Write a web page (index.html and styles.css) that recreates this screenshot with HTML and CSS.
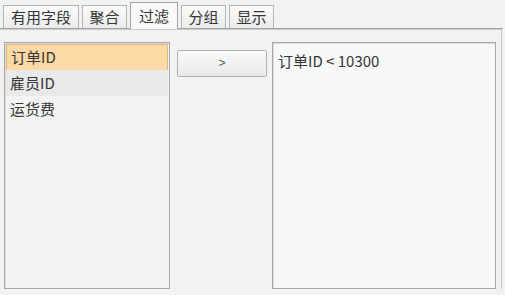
FILE: index.html
```html
<!DOCTYPE html>
<html lang="zh-CN">
<head>
    <meta charset="UTF-8">
    <title>过滤</title>
    <link rel="stylesheet" href="styles.css">
</head>
<body>
    <div class="tabs">
        <div class="tab wide">有用字段</div>
        <div class="tab">聚合</div>
        <div class="tab active">过滤</div>
        <div class="tab">分组</div>
        <div class="tab">显示</div>
    </div>
    <div class="panel">
        <div class="list">
            <div class="row selected">订单ID</div>
            <div class="row hover">雇员ID</div>
            <div class="row">运货费</div>
        </div>
        <div class="middle">
            <button class="move">&gt;</button>
        </div>
        <div class="filter">订单ID &lt; 10300</div>
    </div>
</body>
</html>
```
FILE: styles.css
```css
body {
    margin: 0;
    background-color: #f1f2f1;
    font-family: "Noto Sans CJK SC", "Liberation Sans", sans-serif;
    color: #363636;
    width: 505px;
    height: 295px;
    overflow: hidden;
}
.tabs {
    display: flex;
    align-items: flex-end;
    gap: 3px;
    height: 29px;
    padding-left: 3px;
    border-bottom: 1px solid #a3a5a4;
    box-sizing: border-box;
    margin-right: 2px;
}
.tab {
    width: 45px;
    height: 23px;
    text-align: center;
    font-size: 15px;
    line-height: 22px;
    border: 1px solid #b4b6b5;
    border-bottom: none;
    background: linear-gradient(#fbfbfb, #e9eaea);
    box-sizing: border-box;
}
.tab.wide {
    width: 76px;
}
.tab.active {
    width: 48px;
    height: 27px;
    line-height: 25px;
    background: #f8f9f8;
    border-color: #a3a5a4;
    margin-bottom: -1px;
}
.panel {
    display: flex;
    height: 260px;
    padding: 12px 0 0 4px;
    margin-right: 3px;
    border-top: 1px solid #c9cbca;
    border-right: 1px solid #c4c6c5;
    box-sizing: border-box;
}
.list {
    width: 166px;
    height: 247px;
    border: 1px solid #a6a8a7;
    box-shadow: inset 1px 1px 0 #dcdedd;
    background-color: #f2f3f2;
    box-sizing: border-box;
    padding: 1px;
}
.row {
    height: 26px;
    line-height: 25px;
    padding-left: 4px;
    font-size: 15px;
}
.row.selected {
    background-color: #fdd9a5;
    border: 1px solid #e2b879;
    border-bottom: none;
    line-height: 24px;
    box-sizing: border-box;
}
.row.hover {
    background-color: #e8e9e9;
}
.middle {
    width: 102px;
    padding: 6px 0 0 7px;
    box-sizing: border-box;
}
.move {
    width: 90px;
    height: 27px;
    border: 1px solid #b0b2b1;
    border-radius: 2px;
    background: linear-gradient(#f9f9f9, #e8e9e9);
    font-family: "Liberation Sans", sans-serif;
    font-size: 12px;
    color: #555;
    padding: 0;
}
.filter {
    width: 224px;
    height: 247px;
    border: 1px solid #a6a8a7;
    box-shadow: inset 1px 1px 0 #dcdedd;
    background-color: #f7f9f8;
    box-sizing: border-box;
    padding: 7px 0 0 5px;
    font-size: 15px;
    line-height: 22px;
}
```
